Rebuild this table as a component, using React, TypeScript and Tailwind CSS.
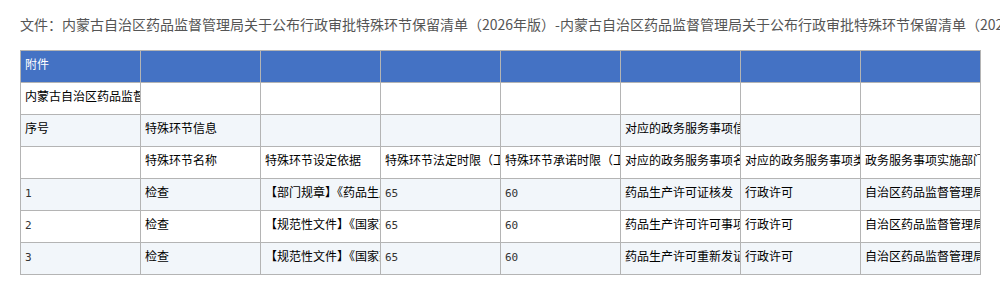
const rows: string[][] = [
  ["附件", "", "", "", "", "", "", ""],
  ["内蒙古自治区药品监督管理局关于公布行政审批特殊环节保留清单（2026年版）", "", "", "", "", "", "", ""],
  ["序号", "特殊环节信息", "", "", "", "对应的政务服务事项信息", "", ""],
  ["", "特殊环节名称", "特殊环节设定依据", "特殊环节法定时限（工作日）", "特殊环节承诺时限（工作日）", "对应的政务服务事项名称", "对应的政务服务事项类型", "政务服务事项实施部门"],
  ["1", "检查", "【部门规章】《药品生产监督管理办法》", "65", "60", "药品生产许可证核发", "行政许可", "自治区药品监督管理局"],
  ["2", "检查", "【规范性文件】《国家药监局关于实施新修订〈药品生产监督管理办法〉有关事项的公告》", "65", "60", "药品生产许可许可事项变更", "行政许可", "自治区药品监督管理局"],
  ["3", "检查", "【规范性文件】《国家药监局关于实施新修订〈药品生产监督管理办法〉有关事项的公告》", "65", "60", "药品生产许可重新发证", "行政许可", "自治区药品监督管理局"],
];

const isNumber = (s: string) => /^\d+$/.test(s);

export default function App() {
  return (
    <div className="min-h-screen bg-white px-5 pt-[14px] overflow-hidden whitespace-nowrap font-['Noto_Sans_CJK_SC',sans-serif]">
      <p className="text-sm leading-5 text-[#555]">
        文件：内蒙古自治区药品监督管理局关于公布行政审批特殊环节保留清单（2026年版）-内蒙古自治区药品监督管理局关于公布行政审批特殊环节保留清单（2026年版）
      </p>

      <table className="mt-4 table-fixed border-collapse w-[961px] text-xs text-black">
        <colgroup>
          {rows[0].map((_, i) => (
            <col key={i} className="w-[120px]" />
          ))}
        </colgroup>
        <tbody>
          {rows.map((row, r) => (
            <tr
              key={r}
              className={r === 0 ? "bg-[#4472c4] text-white" : r % 2 === 0 ? "bg-[#f2f6fa]" : "bg-white"}
            >
              {row.map((cell, c) => (
                <td
                  key={c}
                  className="h-8 border border-[#b4b4b4] px-1 pt-[3px] align-top leading-5 overflow-hidden whitespace-nowrap"
                >
                  {isNumber(cell) ? (
                    <span className="font-['DejaVu_Sans_Mono',monospace] text-[11px] text-[#333]">{cell}</span>
                  ) : (
                    cell
                  )}
                </td>
              ))}
            </tr>
          ))}
        </tbody>
      </table>
    </div>
  );
}
